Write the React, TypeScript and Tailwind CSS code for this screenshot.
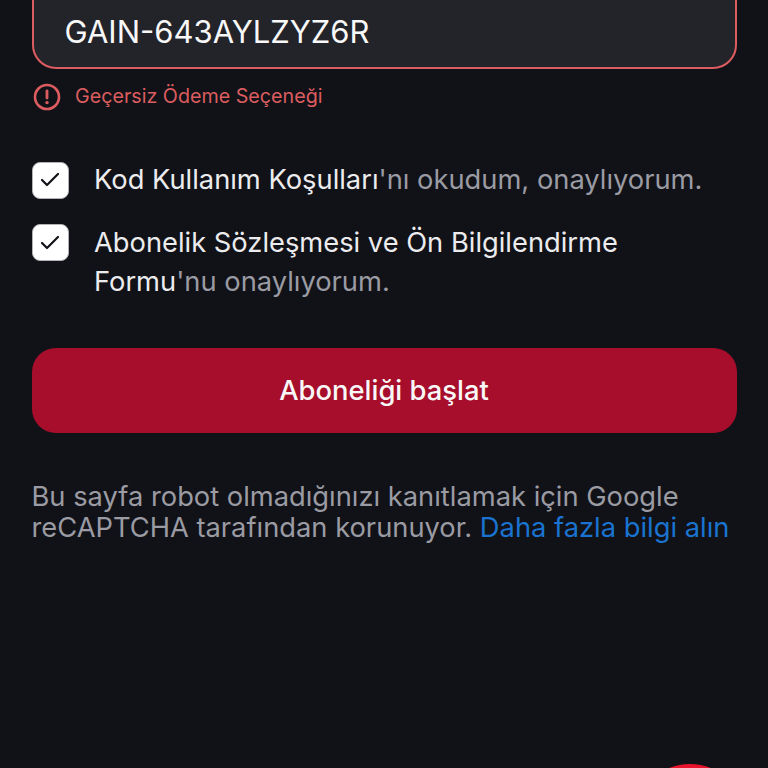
import React from 'react';
import { Check } from 'lucide-react';

const CheckBox = () => (
  <span className="flex h-[37px] w-[37px] shrink-0 items-center justify-center rounded-[8px] border-[1.5px] border-[#b4b4b8] bg-white">
    <Check className="h-[24px] w-[24px] text-[#111218]" strokeWidth={2.2} />
  </span>
);

export default function App() {
  return (
    <div className="relative h-[768px] w-[768px] overflow-hidden bg-[#111218] px-[31.5px] font-['Inter',sans-serif]">
      {/* Code input */}
      <div className="-mt-[31px] flex h-[100px] items-center rounded-[24px] border-[2.5px] border-[#dc5d5f] bg-[#23232a] px-[31px] pt-[26px]">
        <span className="text-[31px] leading-[40px] text-[#f8f8f8]">GAIN-643AYLZYZ6R</span>
      </div>

      <div className="mt-[14px] flex items-center gap-[14px] pl-[1.5px]">
        <svg width="28" height="28" viewBox="0 0 28 28" fill="none" className="shrink-0">
          <circle cx="14" cy="14" r="12" stroke="#dc5d5f" strokeWidth="2.6" />
          <path d="M14 7.8v7.2" stroke="#dc5d5f" strokeWidth="2.8" strokeLinecap="round" />
          <circle cx="14" cy="19.6" r="1.7" fill="#dc5d5f" />
        </svg>
        <span className="pb-[1px] text-[19.7px] leading-[27px] text-[#dc5d5f]">Geçersiz Ödeme Seçeneği</span>
      </div>

      {/* Agreements */}
      <div className="mt-[49px] flex items-center gap-[25.5px]">
        <CheckBox />
        <p className="text-[27.3px] leading-[40px] text-[#ececee]">
          Kod Kullanım Koşulları<span className="text-[#9a9ba3]">'nı okudum, onaylıyorum.</span>
        </p>
      </div>
      <div className="mt-[24px] flex items-start gap-[25.5px]">
        <CheckBox />
        <p className="-mt-[1px] text-[27.3px] leading-[39px] text-[#ececee]">
          Abonelik Sözleşmesi ve Ön Bilgilendirme
          <br />
          Formu<span className="text-[#9a9ba3]">'nu onaylıyorum.</span>
        </p>
      </div>

      <button className="mt-[47px] flex h-[85px] w-full items-center justify-center rounded-[24px] bg-[#a70e2b] text-[27.4px] font-medium text-[#f8f8f8]">
        Aboneliği başlat
      </button>

      <p className="mt-[48px] text-[27.3px] leading-[31px] whitespace-nowrap text-[#9a9ba3]">
        Bu sayfa robot olmadığınızı kanıtlamak için Google
        <br />
        reCAPTCHA tarafından korunuyor. <span className="text-[#1a73d0]">Daha fazla bilgi alın</span>
      </p>

      {/* Floating button peeking in at the bottom */}
      <div className="absolute top-[764px] left-[634px] h-[112px] w-[112px] rounded-full bg-[#e8132d]" />
    </div>
  );
}
